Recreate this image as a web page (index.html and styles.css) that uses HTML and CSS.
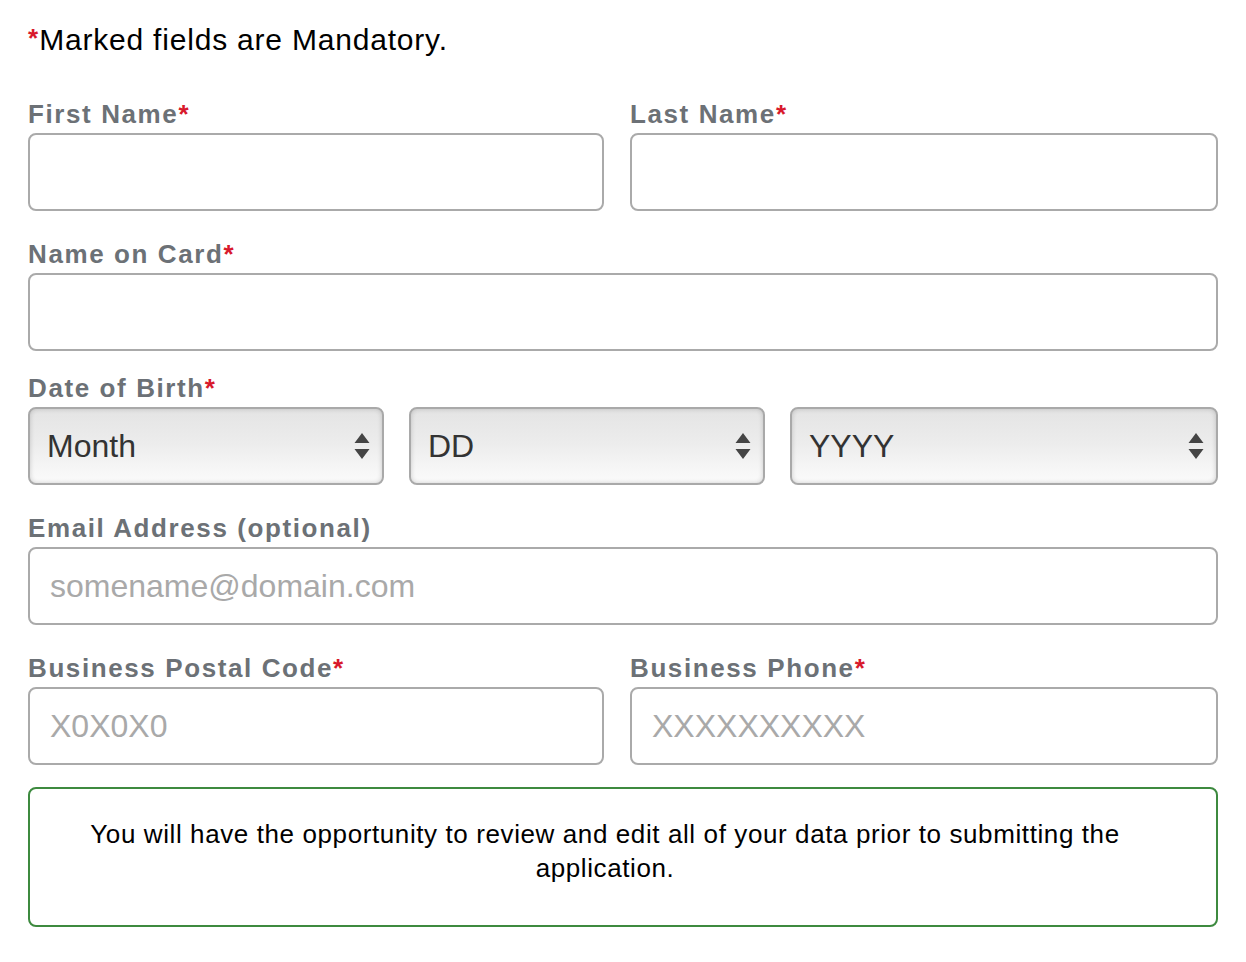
FILE: index.html
```html
<!DOCTYPE html>
<html lang="en">
<head>
<meta charset="utf-8">
<title>Application form</title>
<link rel="stylesheet" href="styles.css">
</head>
<body>
<div class="page">
  <p class="intro"><span class="req">*</span>Marked fields are Mandatory.</p>

  <div class="row two">
    <div class="field">
      <label class="label">First Name<span class="req">*</span></label>
      <div class="input"></div>
    </div>
    <div class="field">
      <label class="label">Last Name<span class="req">*</span></label>
      <div class="input"></div>
    </div>
  </div>

  <div class="row">
    <div class="field">
      <label class="label">Name on Card<span class="req">*</span></label>
      <div class="input"></div>
    </div>
  </div>

  <div class="row row-tight">
    <div class="field">
      <label class="label">Date of Birth<span class="req">*</span></label>
      <div class="selects">
        <div class="select"><span>Month</span>
          <svg class="arrows" width="16" height="26" viewBox="0 0 16 26"><path d="M8 0 L15.5 10 L0.5 10 Z M0.5 16 L15.5 16 L8 26 Z" fill="#454545"/></svg>
        </div>
        <div class="select"><span>DD</span>
          <svg class="arrows" width="16" height="26" viewBox="0 0 16 26"><path d="M8 0 L15.5 10 L0.5 10 Z M0.5 16 L15.5 16 L8 26 Z" fill="#454545"/></svg>
        </div>
        <div class="select"><span>YYYY</span>
          <svg class="arrows" width="16" height="26" viewBox="0 0 16 26"><path d="M8 0 L15.5 10 L0.5 10 Z M0.5 16 L15.5 16 L8 26 Z" fill="#454545"/></svg>
        </div>
      </div>
    </div>
  </div>

  <div class="row">
    <div class="field">
      <label class="label">Email Address (optional)</label>
      <div class="input placeholder">somename@domain.com</div>
    </div>
  </div>

  <div class="row two">
    <div class="field">
      <label class="label">Business Postal Code<span class="req">*</span></label>
      <div class="input placeholder">X0X0X0</div>
    </div>
    <div class="field">
      <label class="label">Business Phone<span class="req">*</span></label>
      <div class="input placeholder">XXXXXXXXXX</div>
    </div>
  </div>

  <div class="notice">
    You will have the opportunity to review and edit all of your data prior to submitting the application.
  </div>
</div>
</body>
</html>
```

FILE: styles.css
```css
* { box-sizing: border-box; }

body {
  margin: 0;
  background: #ffffff;
  font-family: "Liberation Sans", Arial, sans-serif;
  color: #000;
}

.page {
  width: 1246px;
  padding: 20px 28px 0 28px;
}

.intro {
  margin: 0;
  font-size: 30px;
  line-height: 36px;
  letter-spacing: 0.8px;
  color: #000;
}

.intro .req {
  font-size: 26px;
  vertical-align: 3px;
  margin-right: 1px;
  letter-spacing: 0;
}

.req {
  color: #d8192c;
  font-weight: bold;
}

.row {
  margin-top: 28px;
}

.intro + .row {
  margin-top: 41px;
}

.row-tight {
  margin-top: 22px;
}

.two {
  display: grid;
  grid-template-columns: 576px 1fr;
  column-gap: 26px;
}

.field {
  display: flex;
  flex-direction: column;
}

.label {
  display: block;
  font-size: 26px;
  line-height: 30px;
  font-weight: bold;
  letter-spacing: 1.6px;
  color: #6c7176;
  margin-bottom: 4px;
}

.label .req {
  letter-spacing: 0;
}

.input {
  height: 78px;
  border: 2px solid #aaaaaa;
  border-radius: 8px;
  background: #fff;
  padding: 0 20px;
  display: flex;
  align-items: center;
  font-size: 32px;
  color: #333;
}

.placeholder {
  color: #a9a9a9;
}

.selects {
  display: grid;
  grid-template-columns: 356px 356px 1fr;
  column-gap: 25px;
}

.select {
  height: 78px;
  border: 2px solid #a9a9a9;
  border-radius: 8px;
  background: linear-gradient(to bottom, #e4e4e4 0%, #ececec 45%, #fbfbfb 100%);
  box-shadow: inset 0 0 5px rgba(0, 0, 0, 0.18);
  padding: 0 12px 0 17px;
  display: flex;
  align-items: center;
  justify-content: space-between;
  font-size: 32px;
  color: #333;
}

.arrows {
  display: block;
  flex: none;
}

.notice {
  margin-top: 22px;
  height: 140px;
  border: 2px solid #3d8a3f;
  border-radius: 8px;
  padding: 28px 76px 0 40px;
  text-align: center;
  font-size: 26px;
  line-height: 34px;
  letter-spacing: 0.6px;
  color: #000;
}
```
